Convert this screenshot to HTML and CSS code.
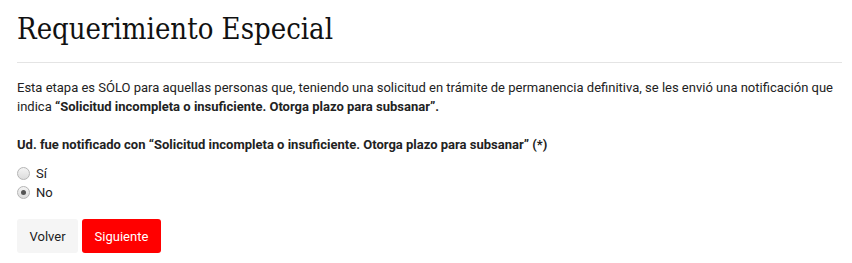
FILE: index.html
```html
<!DOCTYPE html>
<html lang="es">
<head>
<meta charset="utf-8">
<title>Requerimiento Especial</title>
<link rel="stylesheet" href="styles.css">
</head>
<body>
<main class="page">
  <h1 class="title">Requerimiento Especial</h1>
  <hr class="rule">
  <p class="intro">Esta etapa es SÓLO para aquellas personas que, teniendo una solicitud en trámite de permanencia definitiva, se les envió una notificación que indica <strong>“Solicitud incompleta o insuficiente. Otorga plazo para subsanar”.</strong></p>
  <fieldset class="question">
    <legend class="question-label">Ud. fue notificado con “Solicitud incompleta o insuficiente. Otorga plazo para subsanar” (*)</legend>
    <label class="option"><input class="radio" type="radio" name="notif" value="si"> Sí</label>
    <label class="option"><input class="radio" type="radio" name="notif" value="no" checked> No</label>
  </fieldset>
  <div class="actions">
    <button class="btn btn-back" type="button">Volver</button>
    <button class="btn btn-next" type="button">Siguiente</button>
  </div>
</main>
</body>
</html>
```
FILE: styles.css
```css
html, body {
  margin: 0;
  padding: 0;
  background: #fff;
}
.page {
  padding: 0 10px 0 17px;
  font-family: Roboto, "Liberation Sans", sans-serif;
  font-size: 13px;
  color: #222;
}
.title {
  margin: 0;
  padding-top: 10px;
  font-family: "DejaVu Serif", "Liberation Serif", serif;
  font-stretch: semi-condensed;
  font-weight: 400;
  font-size: 29px;
  line-height: 38px;
  color: #111;
}
.rule {
  margin: 14px 0 0 0;
  border: 0;
  border-top: 1px solid #e4e4e4;
  height: 0;
}
.intro {
  margin: 15px 0 0 0;
  line-height: 19px;
}
.intro strong {
  font-weight: 700;
}
.question {
  margin: 19px 0 0 0;
  padding: 0;
  border: 0;
}
.question-label {
  padding: 0;
  font-weight: 700;
  line-height: 19px;
  margin-bottom: 10px;
}
.option {
  display: flex;
  align-items: center;
  gap: 6px;
  height: 19px;
}
.radio {
  appearance: none;
  -webkit-appearance: none;
  margin: 0;
  width: 13px;
  height: 13px;
  border-radius: 50%;
  border: 1px solid #b5b5b5;
  background: linear-gradient(#f4f4f4, #dcdcdc);
  box-sizing: border-box;
  position: relative;
}
.radio:checked::after {
  content: "";
  position: absolute;
  left: 3px;
  top: 3px;
  width: 5px;
  height: 5px;
  border-radius: 50%;
  background: #555;
}
.actions {
  display: flex;
  gap: 4px;
  margin-top: 17px;
}
.btn {
  font-family: Roboto, "Liberation Sans", sans-serif;
  font-size: 13px;
  height: 34px;
  border: 0;
  border-radius: 3px;
  padding: 0 12.5px;
  cursor: pointer;
}
.btn-back {
  background: #f5f5f5;
  color: #222;
}
.btn-next {
  background: #ff0000;
  color: #fff;
}
```
